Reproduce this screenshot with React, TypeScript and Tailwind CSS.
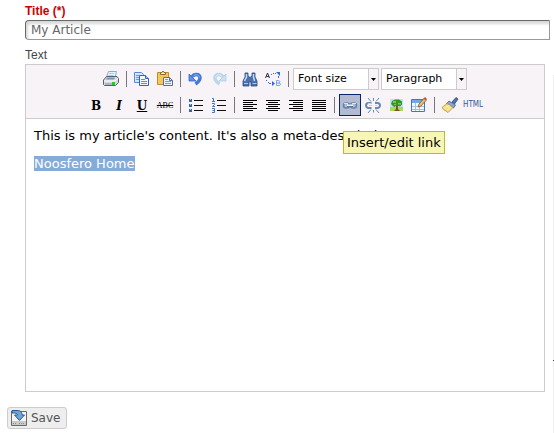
import React, { useState } from 'react';

interface IconProps {
  children: React.ReactNode;
}

function Icon({ children }: IconProps) {
  return (
    <svg viewBox="0 0 20 20" className="w-5 h-5" fill="none" aria-hidden="true">
      {children}
    </svg>
  );
}

const icons: Record<string, React.ReactNode> = {
  print: (
    <Icon>
      <path d="M7.5 2.5H15.5L14 9H5Z" fill="#e6f6fd" stroke="#7fb2d0" />
      <path d="M8 4.500h5M7.500 6.500h5" stroke="#9cd0ec" />
      <path d="M2.500 11L5.500 7.500H16L17.500 9.500V13.500L14.500 16.500H3.500L2.500 15.500Z" fill="#d3dade" stroke="#536273" />
      <path d="M6 8.500h8l-1 2H5z" fill="#8593a0" />
      <path d="M3 12h11l3-2.500" stroke="#fff" />
      <path d="M4 15h7" stroke="#8a949c" />
      <path d="M11 13h3v3h-3z" fill="#22cc22" />
    </Icon>
  ),
  copy: (
    <Icon>
      <path d="M2.500 3.500h7l2 2v8h-9z" fill="#d6e6ff" stroke="#5a8ae0" />
      <path d="M4 6.500h5M4 8.500h4M4 10.500h4" stroke="#6c98e2" />
      <path d="M7.500 6.500h6l3 3v7h-9z" fill="#f2f7ff" stroke="#2f62c0" />
      <path d="M13.500 6.500v3h3" fill="#a9c6f5" stroke="#2f62c0" />
      <path d="M9 10.500h4M9 12.500h6M9 14.500h6" stroke="#5c8ee0" />
    </Icon>
  ),
  paste: (
    <Icon>
      <path d="M2.500 3.500h11v12h-11z" fill="#f5c85a" stroke="#c08a30" />
      <path d="M5.500 5.500v-2h1.500l1-1.500 1 1.500h1.500v2z" fill="#fff4c0" stroke="#8c6a2c" />
      <path d="M8.500 8.500h6l3 3v5h-9z" fill="#eaf1ff" stroke="#5a6f9e" />
      <path d="M14.500 8.500v3h3" stroke="#5a6f9e" />
      <path d="M10 10.500h3M10 12.500h6M10 14.500h6" stroke="#7d9cd8" />
    </Icon>
  ),
  undo: (
    <Icon>
      <path d="M6 8C8 4.500 13.500 4.500 14 8.500C14.300 11 12.500 13 9.500 15" stroke="#4479d8" strokeWidth="3.500" />
      <path d="M7 7.500C9 5 13 5 13.500 8.500" stroke="#8fb8f6" />
      <path d="M3 5v7h7z" fill="#5b91ea" stroke="#3467c8" strokeWidth="0.800" />
    </Icon>
  ),
  redo: (
    <Icon>
      <path d="M14 8C12 4.500 6.500 4.500 6 8.500C5.700 11 7.500 13 10.500 15" stroke="#bcd5ee" strokeWidth="3.500" />
      <path d="M13 7.500C11 5 7 5 6.500 8.500" stroke="#e0eefa" />
      <path d="M17 5v7h-7z" fill="#cbe0f4" stroke="#b0cbe6" strokeWidth="0.800" />
    </Icon>
  ),
  search: (
    <Icon>
      <path d="M5 4h3v3l2 1.500 2-1.500v-3h3v4l2 4v5h-6v-4h-2v4h-6v-5l2-4z" fill="#4a71ac" stroke="#2b4a84" strokeWidth="0.800" />
      <path d="M6.500 5v3l-2 4M13.500 5v3l1 4" stroke="#c4dcf8" strokeWidth="1.500" />
      <path d="M4 14.500h4M12.500 14.500h4" stroke="#a4c4ee" />
    </Icon>
  ),
  replace: (
    <Icon>
      <path d="M2.500 9L4.500 4L6.500 9M3.500 7.500h2.500" stroke="#2a2f4a" />
      <path d="M13.500 11.500v5h2.500c2 0 2-2.500 0-2.500h-2.500M13.500 11.500h2c1.800 0 1.800 2.500 0 2.500" stroke="#7ea1f0" />
      <path d="M8 5.500h1M10 4.500h1M12 4.500h1M15.500 7v2M3.500 11v1M5 13.500h1M6 14.500h2" stroke="#3c6fe0" />
      <path d="M13 3h4v4zM9 12l3 2.500L9 17z" fill="#3568dc" />
    </Icon>
  ),
  bullets: (
    <Icon>
      <path d="M8 5.500h9M8 10.500h9M8 15.500h9" stroke="#111" />
      <path d="M3 4h3v3h-3zM3 9h3v3h-3zM3 14h3v3h-3z" fill="#3b679e" />
      <path d="M4 4h1v1h-1zM4 9h1v1h-1zM4 14h1v1h-1z" fill="#9fc3ea" />
    </Icon>
  ),
  numbers: (
    <Icon>
      <path d="M8 5.500h9M8 10.500h9M8 15.500h9" stroke="#111" />
      <path d="M3 3.500h1.500V6M3 6.500h3M3 8.500h2.500v1L3.500 11.500H6M3 13.500h2.500v4H3M3.500 15.500h2" stroke="#4775b8" />
    </Icon>
  ),
  left: <Icon><path d="M3 5.500h14M3 7.500h10M3 9.500h14M3 11.500h10M3 13.500h14M3 15.500h10" stroke="#000" /></Icon>,
  center: <Icon><path d="M3 5.500h14M5 7.500h10M3 9.500h14M5 11.500h10M3 13.500h14M5 15.500h10" stroke="#000" /></Icon>,
  right: <Icon><path d="M3 5.500h14M7 7.500h10M3 9.500h14M7 11.500h10M3 13.500h14M7 15.500h10" stroke="#000" /></Icon>,
  full: <Icon><path d="M3 5.500h14M3 7.500h14M3 9.500h14M3 11.500h14M3 13.500h14M3 15.500h14" stroke="#000" /></Icon>,
  link: (
    <Icon>
      <rect x="3.500" y="8" width="6" height="5" rx="2.500" stroke="#6484ac" strokeWidth="1.600" />
      <rect x="10.500" y="8" width="6" height="5" rx="2.500" stroke="#6484ac" strokeWidth="1.600" />
      <path d="M4 8.500h4M12 8.500h4" stroke="#d5e2f2" />
      <path d="M7 10.500h6" stroke="#eef4fc" strokeWidth="2" />
      <path d="M7 11.500h6" stroke="#5a77a2" />
    </Icon>
  ),
  unlink: (
    <Icon>
      <path d="M8.500 8H5.500a2.500 2.500 0 0 0 0 5h3M12 8h2.500a2.500 2.500 0 0 1 0 5H12" stroke="#6789b4" strokeWidth="2" />
      <path d="M5 8.500h3M6 10.500h3M12 10.500h2" stroke="#bdd0e8" />
      <path d="M10.500 3v3M5 3l3 3.500M16 3l-3 3.500M10.500 15v2.500M5 18l3-3.500M16 18l-3-3.500" stroke="#6a88ae" />
    </Icon>
  ),
  image: (
    <Icon>
      <path d="M4 4h13v12H4z" fill="#b9e4fa" />
      <path d="M4 12h13v4H4z" fill="#a4dc58" />
      <path d="M10 10h2v4l2 2H8l2-2z" fill="#85511c" />
      <path d="M5 9l1-3 3-1.500h4l3 2v3l-2 2-3-1-3 1.500z" fill="#379428" />
      <path d="M7 6h3v2H7zM12 8h3v1.500h-3zM8 9h2v1H8z" fill="#7cc844" />
    </Icon>
  ),
  table: (
    <Icon>
      <path d="M2.500 4.500h13v12h-13z" fill="#f3f7ff" stroke="#4a72b8" />
      <path d="M3 5h12v3H3z" fill="#78a3e4" />
      <path d="M3 11.500h12M3 14.500h12M6.500 8v8M10.500 8v8" stroke="#a5bee6" />
      <path d="M9 12l1-3 5.500-6 2 2-5.500 6z" fill="#e8bd74" stroke="#8a5a2a" strokeWidth="0.800" />
      <path d="M14.500 3.500L16 2l2 2-1.500 1.500z" fill="#b4584a" />
    </Icon>
  ),
  cleanup: (
    <Icon>
      <path d="M12 7l4-4.500 2 1.500-3.500 5z" fill="#5574ac" stroke="#29477c" strokeWidth="0.800" />
      <path d="M9 6l6.500 4-2 3-7-4z" fill="#8aa5d4" stroke="#3c5a92" strokeWidth="0.800" />
      <path d="M7 8.500l6 4-5 5-2-1.500-2-1-2-2.500z" fill="#f5dc86" stroke="#b3962c" strokeWidth="0.800" />
      <path d="M4.500 13l5-2.500M7 15.500l4-3.500" stroke="#fff6c8" />
    </Icon>
  ),
};

interface ToolProps {
  label: string;
  active?: boolean;
  children: React.ReactNode;
}

function Tool({ label, active, children }: ToolProps) {
  return (
    <button
      type="button"
      aria-label={label}
      className={`flex items-center justify-center w-[22px] h-[22px] border ${
        active ? 'border-[#0a246a] bg-[#b2bbd0]' : 'border-transparent'
      }`}
    >
      {children}
    </button>
  );
}

function Separator() {
  return (
    <div className="flex justify-center w-[7px]">
      <div className="w-px h-4 bg-[#77777c]" />
    </div>
  );
}

function Dropdown({ label }: { label: string }) {
  return (
    <div className="relative w-[86px] h-[22px]">
      <select
        aria-label={label}
        className="block w-full h-full appearance-none border border-[#cccccc] bg-white pl-1 text-[11px] text-black"
      >
        <option>{label}</option>
      </select>
      <span className="pointer-events-none absolute right-px inset-y-px flex items-center w-[10px] border-l border-[#cccccc] bg-[#f7f3f7]">
        <svg viewBox="0 0 9 5" className="w-[9px] h-[5px]" aria-hidden="true">
          <path d="M2 1h5L4.500 4z" fill="#000" />
        </svg>
      </span>
    </div>
  );
}

export default function App() {
  const [title, setTitle] = useState('My Article');

  return (
    <div className="bg-white font-['DejaVu_Sans',sans-serif]">
      <div className="flex justify-between">
        <form className="flex-1 pl-[7px] pr-[3px] pb-1" onSubmit={(e) => e.preventDefault()}>
          <div className="pl-[18px] pt-1">
            <label
              htmlFor="title"
              className="block h-4 font-['Liberation_Sans',sans-serif] text-xs leading-[14px] font-bold text-[#cc0000]"
            >
              Title (*)
            </label>
            <input
              id="title"
              value={title}
              onChange={(e) => setTitle(e.target.value)}
              className="block w-full h-5 rounded-l-sm border border-[#999999] border-t-[#666a64] border-l-[#666a64] bg-white px-[5px] text-xs text-[#666666] shadow-[inset_2px_3px_3px_#d8d8d8] outline-none"
            />
            <div className="mt-2 h-4 font-['Liberation_Sans',sans-serif] text-xs leading-[14px] text-[#444444]">
              Text
            </div>

            <div className="mr-[5px] border border-[#cccccc]">
              <div className="flex flex-col items-center gap-1 border-b border-[#cccccc] bg-[#f7f3f7] pt-[3px] pr-[3px] pb-[2px]">
                <div className="flex items-center gap-px">
                  <Tool label="Print">{icons.print}</Tool>
                  <Separator />
                  <Tool label="Copy">{icons.copy}</Tool>
                  <Tool label="Paste">{icons.paste}</Tool>
                  <Separator />
                  <Tool label="Undo">{icons.undo}</Tool>
                  <Tool label="Redo">{icons.redo}</Tool>
                  <Separator />
                  <Tool label="Find">{icons.search}</Tool>
                  <Tool label="Find/Replace">{icons.replace}</Tool>
                  <Separator />
                  <div className="flex gap-[2px]">
                    <Dropdown label="Font size" />
                    <Dropdown label="Paragraph" />
                  </div>
                </div>
                <div className="flex items-center gap-px pl-[2px]">
                  <Tool label="Bold">
                    <span className="pt-0.5 font-['DejaVu_Serif',serif] text-xs font-bold text-black">B</span>
                  </Tool>
                  <Tool label="Italic">
                    <span className="pt-0.5 font-['DejaVu_Serif',serif] text-xs font-bold italic text-black">I</span>
                  </Tool>
                  <Tool label="Underline">
                    <span className="pt-0.5 font-['DejaVu_Serif',serif] text-xs font-bold text-black underline">U</span>
                  </Tool>
                  <Tool label="Strikethrough">
                    <span className="pt-0.5 font-['Liberation_Serif',serif] text-[8px] text-black line-through">ABC</span>
                  </Tool>
                  <Separator />
                  <Tool label="Unordered list">{icons.bullets}</Tool>
                  <Tool label="Ordered list">{icons.numbers}</Tool>
                  <Separator />
                  <Tool label="Align left">{icons.left}</Tool>
                  <Tool label="Align center">{icons.center}</Tool>
                  <Tool label="Align right">{icons.right}</Tool>
                  <Tool label="Align full">{icons.full}</Tool>
                  <Separator />
                  <div className="relative">
                    <Tool label="Insert/edit link" active>{icons.link}</Tool>
                    <div
                      role="tooltip"
                      className="absolute left-1 top-[37px] h-[23px] whitespace-nowrap border border-[#bdb838] bg-[#f8f6b4] px-[3px] text-[13px] leading-[21px] text-black"
                    >
                      Insert/edit link
                    </div>
                  </div>
                  <Tool label="Unlink">{icons.unlink}</Tool>
                  <Tool label="Insert/edit image">{icons.image}</Tool>
                  <Tool label="Insert table">{icons.table}</Tool>
                  <Separator />
                  <Tool label="Cleanup messy code">{icons.cleanup}</Tool>
                  <Tool label="Edit HTML source">
                    <span className="font-['DejaVu_Sans_Condensed','DejaVu_Sans',sans-serif] text-[8px] text-[#31599c]">HTML</span>
                  </Tool>
                </div>
              </div>
              <div className="h-[272px] px-2 pt-[9px] text-[13px] leading-4 text-black">
                <p>This is my article's content. It's also a meta-description.</p>
                <p className="mt-3">
                  <a href="#home" className="bg-[#86abd9] text-white">Noosfero Home</a>
                </p>
              </div>
            </div>
          </div>

          <button
            type="submit"
            className="mt-[15px] flex items-center gap-1 h-[22px] rounded-[3px] border border-[#cccccc] bg-[#eeeeee] pl-[3px] pr-[6px] text-xs text-[#555555]"
          >
            <svg viewBox="0 0 16 16" className="w-4 h-4" fill="none" aria-hidden="true">
              <path d="M0.500 1.500h15v14H0.500z" fill="#f4f4f2" stroke="#666a66" />
              <path d="M1 11h14v4H1z" fill="#c9cbc8" />
              <path d="M2 13.500h4M8 13.500h6" stroke="#8c8f8a" strokeDasharray="1 1" />
              <path d="M1 0.500h5c4 0 5 2 5 4.500h2.500L8.500 10.500 3.500 5H6.500C6.500 3.500 5 3 1 3z" fill="#6ea5d8" stroke="#22598f" />
            </svg>
            Save
          </button>
        </form>
        <div className="mt-[75px] w-px bg-[#f0f0f0]">
          <div className="mt-[285px] h-px bg-[#444444]" />
        </div>
      </div>
    </div>
  );
}
